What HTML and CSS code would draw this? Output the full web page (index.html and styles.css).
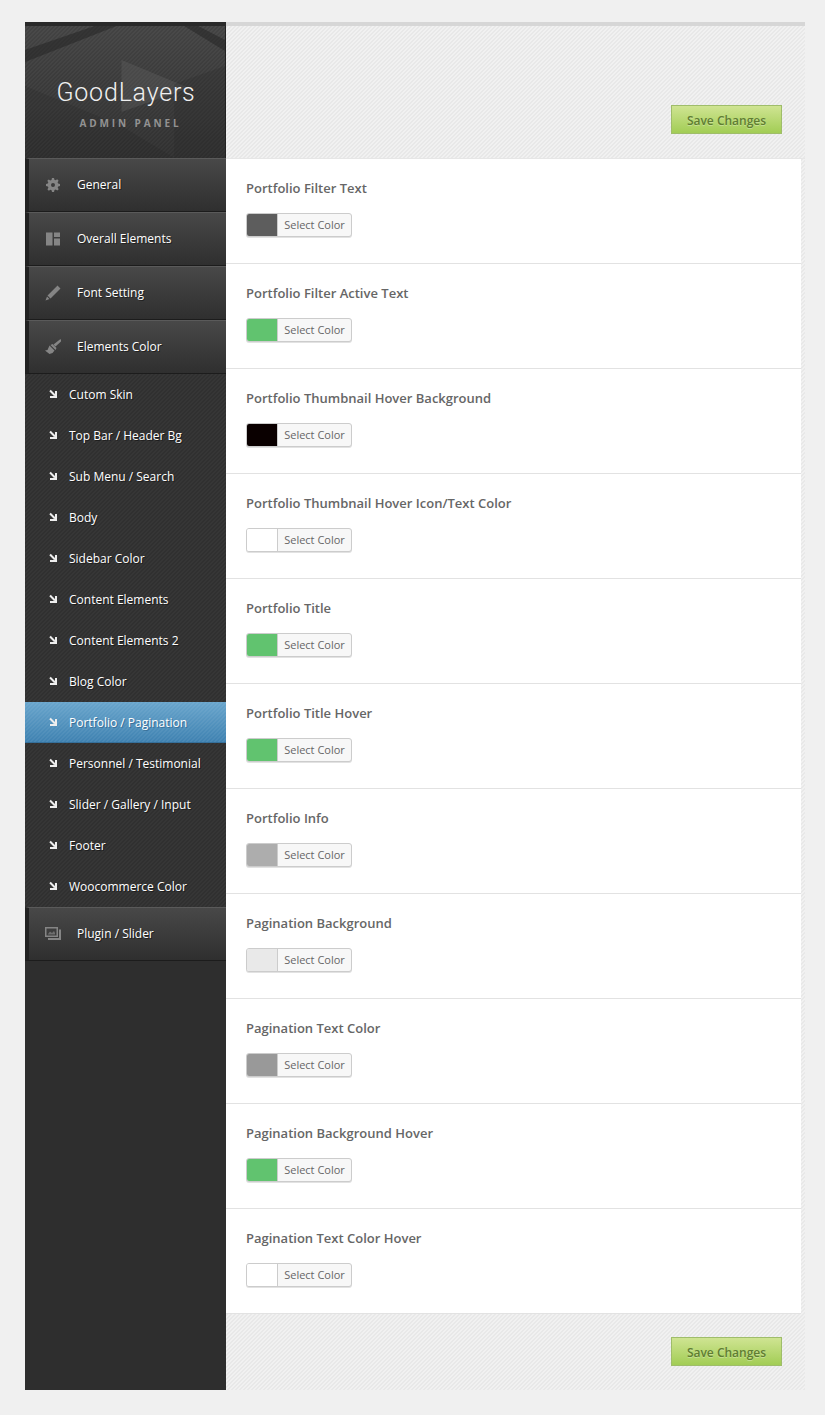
FILE: index.html
```html
<!DOCTYPE html>
<html lang="en">
<head>
<meta charset="utf-8">
<title>GoodLayers Admin Panel</title>
<link rel="stylesheet" href="styles.css">
</head>
<body>
<div class="panel">
  <aside class="sidebar">
    <div class="logo">
      <svg class="logo-art" viewBox="0 0 201 132" preserveAspectRatio="none" aria-hidden="true">
        <path d="M0 24 L70 0 L92 0 L0 36Z" fill="#222" opacity=".5"/>
        <path d="M160 0 L174 0 L201 14 L201 25Z" fill="#222" opacity=".5"/>
        <path d="M97 34 L165 62 L97 86Z" fill="#6a6a6a" opacity=".3"/>
        <path d="M0 60 L97 100 L150 132 L0 132Z" fill="#222" opacity=".16"/>
        <path d="M150 58 L201 40 L201 132 L150 132Z" fill="#222" opacity=".2"/>
      </svg>
      <div class="logo-title">GoodLayers</div>
      <div class="logo-sub">ADMIN PANEL</div>
    </div>
    <nav>
      <a class="main-item"><span class="main-icon"><svg viewBox="0 0 16 16"><path fill-rule="evenodd" d="M7 1h2l.4 1.8 1.2.5 1.6-1 1.4 1.4-1 1.6.5 1.2L15 7v2l-1.8.4-.5 1.2 1 1.6-1.4 1.4-1.6-1-1.2.5L9 15H7l-.4-1.8-1.2-.5-1.6 1-1.4-1.4 1-1.6-.5-1.2L1 9V7l1.8-.4.5-1.2-1-1.6 1.4-1.4 1.6 1 1.2-.5ZM8 6a2 2 0 1 0 0 4 2 2 0 0 0 0-4Z"/></svg></span><span class="main-text">General</span></a>
      <a class="main-item"><span class="main-icon"><svg viewBox="0 0 16 16"><path d="M1 1.500h6.500v13H1ZM9 1.500h6v4.500H9ZM9 7.500h6v7H9Z"/></svg></span><span class="main-text">Overall Elements</span></a>
      <a class="main-item"><span class="main-icon"><svg viewBox="0 0 16 16"><path d="M12.500 0.500l3 3-10 10-3-3ZM2 11.500l2.500 2.500L0.500 15.500Z"/></svg></span><span class="main-text">Font Setting</span></a>
      <a class="main-item"><span class="main-icon"><svg viewBox="0 0 16 16"><path d="M15.500 0l1 2-6 5.500L8.500 5.500ZM7.500 5l4 4-1 2-5-5ZM4.500 6.500l5 5-2 2.500-3 1L0 11.500l2.500-.5Z"/></svg></span><span class="main-text">Elements Color</span></a>
      <ul class="sub-menu">
        <li class="sub-item"><span class="arrow"></span>Cutom Skin</li>
        <li class="sub-item"><span class="arrow"></span>Top Bar / Header Bg</li>
        <li class="sub-item"><span class="arrow"></span>Sub Menu / Search</li>
        <li class="sub-item"><span class="arrow"></span>Body</li>
        <li class="sub-item"><span class="arrow"></span>Sidebar Color</li>
        <li class="sub-item"><span class="arrow"></span>Content Elements</li>
        <li class="sub-item"><span class="arrow"></span>Content Elements 2</li>
        <li class="sub-item"><span class="arrow"></span>Blog Color</li>
        <li class="sub-item active"><span class="arrow"></span>Portfolio / Pagination</li>
        <li class="sub-item"><span class="arrow"></span>Personnel / Testimonial</li>
        <li class="sub-item"><span class="arrow"></span>Slider / Gallery / Input</li>
        <li class="sub-item"><span class="arrow"></span>Footer</li>
        <li class="sub-item"><span class="arrow"></span>Woocommerce Color</li>
      </ul>
      <a class="main-item"><span class="main-icon"><svg viewBox="0 0 16 16"><path fill-rule="evenodd" d="M0 1h13v10H0ZM1.500 2.500v7h10v-7Z"/><path d="M14 3.500h2V14H3v-2h11Z"/><path d="M3 8l2-2.500 2 1.500L9 5l1 2v1.500H3Z" opacity=".7"/></svg></span><span class="main-text">Plugin / Slider</span></a>
    </nav>
  </aside>
  <main class="content">
    <header class="bar bar-top"><button class="save">Save Changes</button></header>
    <section class="fields">
      <div class="field"><h3 class="field-label">Portfolio Filter Text</h3><div class="picker"><span class="swatch swatch-grey"></span><span class="picker-text">Select Color</span></div></div>
      <div class="field"><h3 class="field-label">Portfolio Filter Active Text</h3><div class="picker"><span class="swatch swatch-green"></span><span class="picker-text">Select Color</span></div></div>
      <div class="field"><h3 class="field-label">Portfolio Thumbnail Hover Background</h3><div class="picker"><span class="swatch swatch-black"></span><span class="picker-text">Select Color</span></div></div>
      <div class="field"><h3 class="field-label">Portfolio Thumbnail Hover Icon/Text Color</h3><div class="picker"><span class="swatch swatch-white"></span><span class="picker-text">Select Color</span></div></div>
      <div class="field"><h3 class="field-label">Portfolio Title</h3><div class="picker"><span class="swatch swatch-green"></span><span class="picker-text">Select Color</span></div></div>
      <div class="field"><h3 class="field-label">Portfolio Title Hover</h3><div class="picker"><span class="swatch swatch-green"></span><span class="picker-text">Select Color</span></div></div>
      <div class="field"><h3 class="field-label">Portfolio Info</h3><div class="picker"><span class="swatch swatch-silver"></span><span class="picker-text">Select Color</span></div></div>
      <div class="field"><h3 class="field-label">Pagination Background</h3><div class="picker"><span class="swatch swatch-light"></span><span class="picker-text">Select Color</span></div></div>
      <div class="field"><h3 class="field-label">Pagination Text Color</h3><div class="picker"><span class="swatch swatch-mid"></span><span class="picker-text">Select Color</span></div></div>
      <div class="field"><h3 class="field-label">Pagination Background Hover</h3><div class="picker"><span class="swatch swatch-green"></span><span class="picker-text">Select Color</span></div></div>
      <div class="field"><h3 class="field-label">Pagination Text Color Hover</h3><div class="picker"><span class="swatch swatch-white"></span><span class="picker-text">Select Color</span></div></div>
    </section>
    <footer class="bar bar-bottom"><button class="save">Save Changes</button></footer>
  </main>
</div>
</body>
</html>
```
FILE: styles.css
```css
* { box-sizing: border-box; }
html, body { margin: 0; padding: 0; }
body {
  background: #f0f0f0;
  font-family: "Open Sans", "Liberation Sans", sans-serif;
  height: 1415px;
  overflow: hidden;
}
.panel {
  display: flex;
  width: 780px;
  height: 1368px;
  margin: 22px 0 0 25px;
}
.sidebar {
  width: 201px;
  flex: none;
  background: #2e2e2e;
  border-top: 4px solid #2a2a2a;
}
.logo {
  position: relative;
  height: 132px;
  border-right: 1px solid #222;
  background:
    linear-gradient(135deg, rgba(0,0,0,.1) 25%, transparent 25%, transparent 50%, rgba(0,0,0,.1) 50%, rgba(0,0,0,.1) 75%, transparent 75%) 0 0 / 4px 4px,
    linear-gradient(#4a4a4a, #363636);
  display: flex;
  flex-direction: column;
  align-items: center;
  overflow: hidden;
}
.logo-art { position: absolute; inset: 0; width: 100%; height: 100%; }
.logo-title {
  position: relative;
  margin-top: 50px;
  padding-left: 2px;
  font-family: Roboto, "Open Sans", sans-serif;
  font-weight: 300;
  font-size: 25px;
  line-height: 34px;
  color: #f0f0f0;
  letter-spacing: .8px;
}
.logo-sub {
  position: relative;
  margin-top: 6px;
  padding-left: 11px;
  font-size: 10px;
  line-height: 14px;
  font-weight: 700;
  letter-spacing: 2.9px;
  color: #929292;
}
.main-item {
  display: flex;
  align-items: center;
  height: 54px;
  padding-left: 16px;
  font-size: 12px;
  font-weight: 400;
  color: #fff;
  background: linear-gradient(#484848, #2f2f2f);
  border-top: 1px solid #5a5a5a;
  border-bottom: 1px solid #1c1c1c;
  border-left: 4px solid #222;
  text-shadow: 1px 1px 0 #222;
}
.main-text { padding-bottom: 2px; }
.main-icon {
  width: 16px;
  height: 16px;
  margin-right: 16px;
  display: block;
  flex: none;
}
.main-icon svg { display: block; width: 16px; height: 16px; fill: #858585; }
.sub-menu {
  list-style: none;
  margin: 0;
  padding: 0;
  background:
    linear-gradient(135deg, rgba(0,0,0,.1) 25%, transparent 25%, transparent 50%, rgba(0,0,0,.1) 50%, rgba(0,0,0,.1) 75%, transparent 75%) 0 0 / 4px 4px,
    #363636;
}
.sub-item {
  display: flex;
  align-items: center;
  height: 41px;
  padding-left: 25px;
  font-size: 12px;
  color: #fff;
  text-shadow: 1px 1px 0 #1e1e1e;
}
.sub-item.active {
  background:
    linear-gradient(135deg, rgba(255,255,255,.05) 25%, transparent 25%, transparent 50%, rgba(255,255,255,.05) 50%, rgba(255,255,255,.05) 75%, transparent 75%) 0 0 / 4px 4px,
    linear-gradient(#69a5cc, #3f82b1);
  border-bottom: 1px solid #35709b;
  text-shadow: 1px 1px 0 #3b7199;
}
.arrow {
  position: relative;
  width: 7px;
  height: 7px;
  margin-right: 12px;
  flex: none;
  border-right: 2px solid #eee;
  border-bottom: 2px solid #eee;
}
.arrow::after {
  content: "";
  position: absolute;
  left: -1px;
  top: 1px;
  width: 7px;
  height: 2px;
  background: #eee;
  transform: rotate(45deg);
}
.content {
  flex: 1;
  display: flex;
  flex-direction: column;
  background:
    linear-gradient(135deg, #e8e8e8 25%, transparent 25%, transparent 50%, #e8e8e8 50%, #e8e8e8 75%, transparent 75%) 0 0 / 4px 4px,
    #f1f1f1;
  border-top: 4px solid #d6d6d6;
  min-width: 0;
}
.bar { display: flex; justify-content: flex-end; padding-right: 23px; }
.bar-top { height: 133px; padding-top: 79px; border-bottom: 1px solid #e6e6e6; }
.bar-bottom { flex: 1; padding-top: 23px; }
.save {
  width: 111px;
  height: 29px;
  padding: 0;
  font-family: inherit;
  font-size: 12px;
  line-height: 29px;
  font-weight: 600;
  color: #5f7d32;
  background: linear-gradient(#cfe492, #a2cd55);
  border: 1px solid #9fbd6a;
  text-shadow: 0 1px 0 rgba(255,255,255,.3);
}
.fields { width: 575px; background: #fff; }
.field {
  height: 105px;
  padding: 19px 20px 0;
  border-bottom: 1px solid #e2e2e2;
}
.field-label {
  margin: 0;
  font-size: 13px;
  line-height: 20px;
  font-weight: 600;
  color: #666;
}
.picker {
  display: flex;
  width: 106px;
  height: 24px;
  margin-top: 15px;
  border: 1px solid #ccc;
  border-radius: 3px;
  overflow: hidden;
  background: #f7f7f7;
  box-shadow: 0 1px 0 #e2e2e2;
}
.swatch { width: 31px; flex: none; border-right: 1px solid #ccc; }
.swatch-grey { background: #5d5d5d; }
.swatch-green { background: #61c36f; }
.swatch-black { background: #0a0000; }
.swatch-white { background: #fff; }
.swatch-silver { background: #adadad; }
.swatch-light { background: #e9e9e9; }
.swatch-mid { background: #999; }
.picker-text {
  flex: 1;
  font-size: 11px;
  line-height: 22px;
  text-align: center;
  color: #666;
}
```
